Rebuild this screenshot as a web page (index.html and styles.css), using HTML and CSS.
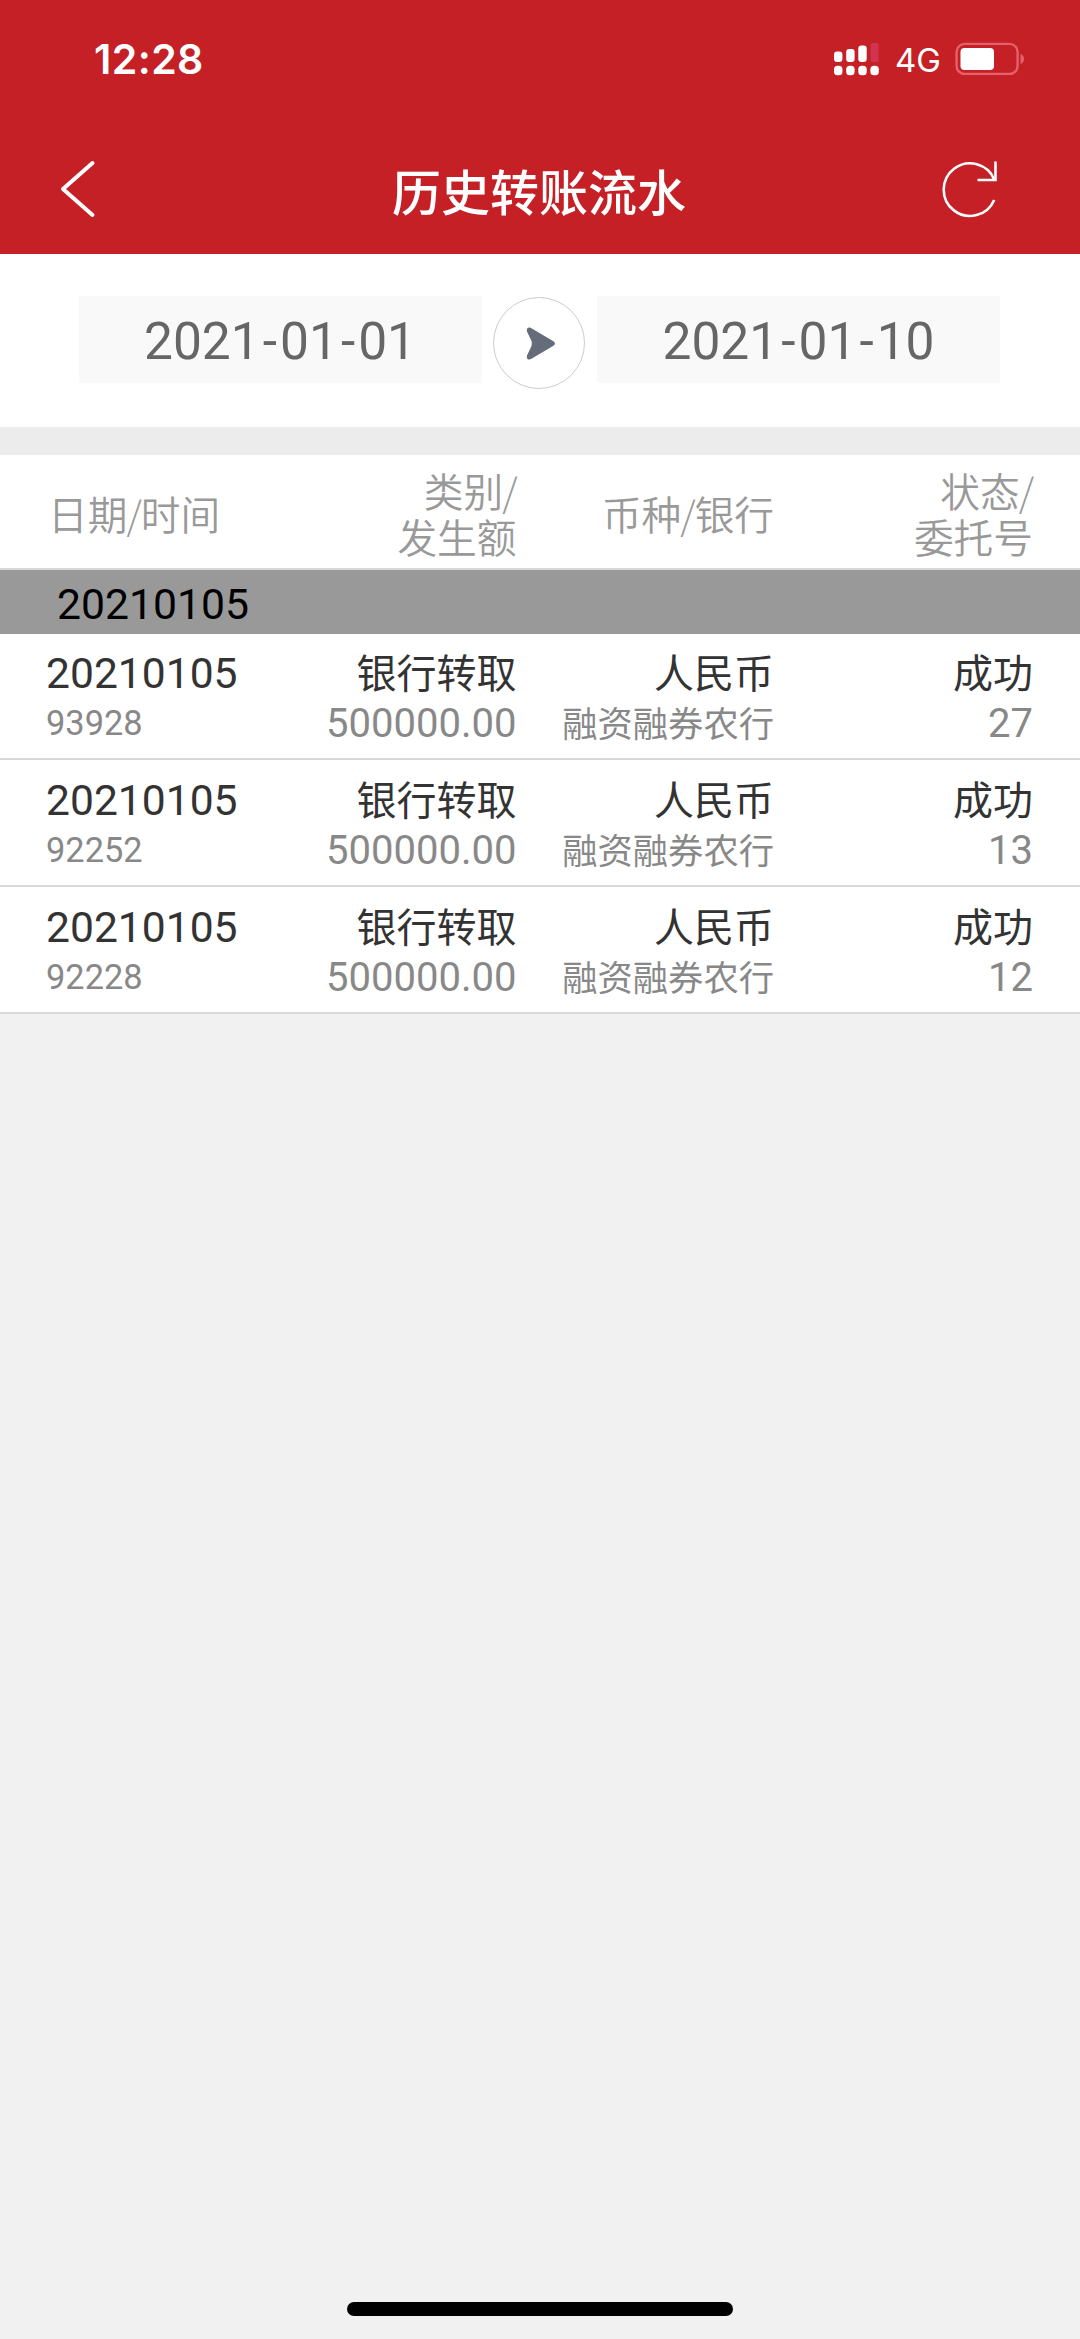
FILE: index.html
```html
<!DOCTYPE html>
<html lang="zh-CN">
<head>
<meta charset="utf-8">
<title>历史转账流水</title>
<link rel="stylesheet" href="styles.css">
</head>
<body>
<header class="top">
  <div class="status">
    <span class="clock">12:28</span>
    <div class="indicators">
      <svg class="signal" width="46" height="34" viewBox="0 0 46 34" fill="#fff">
        <rect x="0" y="9.5" width="8.4" height="10.5" rx="3"/>
        <rect x="12.2" y="7" width="8.4" height="13" rx="3"/>
        <rect x="24.3" y="3.5" width="8.4" height="16.5" rx="3"/>
        <rect x="36.6" y="1" width="8" height="19" rx="2" fill="#d23350"/>
        <rect x="0" y="23.7" width="8.4" height="9.6" rx="3.6"/>
        <rect x="12.2" y="23.7" width="8.4" height="9.6" rx="3.6"/>
        <rect x="24.3" y="23.7" width="8.4" height="9.6" rx="3.6"/>
        <rect x="36.4" y="23.7" width="8.4" height="9.6" rx="3.6"/>
      </svg>
      <span class="network">4G</span>
      <svg class="battery" width="70" height="34" viewBox="0 0 70 34">
        <rect x="1.6" y="1.9" width="61" height="30" rx="8" fill="none" stroke="#e4606a" stroke-width="2.4"/>
        <rect x="5.5" y="6" width="33.5" height="22" rx="4" fill="#fff"/>
        <path d="M65.5 12c4.8 1.6 4.8 8.4 0 10z" fill="#e4606a"/>
      </svg>
    </div>
  </div>
  <div class="nav">
    <svg class="back" width="40" height="60" viewBox="0 0 40 60" fill="none" stroke="#fff" stroke-width="4" stroke-linecap="round" stroke-linejoin="round"><path d="M35.500 4 6 30l29.500 26"/></svg>
    <h1 class="title">历史转账流水</h1>
    <svg class="refresh" width="60" height="60" viewBox="0 0 60 60" fill="none" stroke="#fff" stroke-width="2.600"><path d="M54.300 20.500A26.300 26.300 0 1 0 54.200 41"/><path d="M55.500 2.500V21H37.500"/></svg>
  </div>
</header>
<section class="range">
  <div class="date">2021<span class="dash">-</span>01<span class="dash">-</span>01</div>
  <div class="go"><svg width="30" height="33" viewBox="0 0 30 33"><path d="M5 1 27 14Q31 16.500 27 19L5 32C2 33.500 0 31.300 1.100 28.300L5.300 19.500Q6.400 16.500 5.300 13.500L1.100 4.700C0 1.700 2-.5 5 1Z" fill="#656d7b"/></svg></div>
  <div class="date">2021<span class="dash">-</span>01<span class="dash">-</span>10</div>
</section>
<main class="list">
  <div class="head">
    <div class="first">日期<i class="slash">/</i>时间</div>
    <div>类别<i class="slash">/</i><br>发生额</div>
    <div>币种<i class="slash">/</i>银行</div>
    <div>状态<i class="slash">/</i><br>委托号</div>
  </div>
  <div class="group">20210105</div>
  <div class="record">
    <span class="day">20210105</span><span>银行转取</span><span>人民币</span><span>成功</span>
    <span class="sub time">93928</span><span class="sub">500000.00</span><span class="sub bank">融资融券农行</span><span class="sub">27</span>
  </div>
  <div class="record">
    <span class="day">20210105</span><span>银行转取</span><span>人民币</span><span>成功</span>
    <span class="sub time">92252</span><span class="sub">500000.00</span><span class="sub bank">融资融券农行</span><span class="sub">13</span>
  </div>
  <div class="record">
    <span class="day">20210105</span><span>银行转取</span><span>人民币</span><span>成功</span>
    <span class="sub time">92228</span><span class="sub">500000.00</span><span class="sub bank">融资融券农行</span><span class="sub">12</span>
  </div>
</main>
<footer class="home"><div class="home-bar"></div></footer>
</body>
</html>
```
FILE: styles.css
```css
* { box-sizing: border-box; }
body {
  margin: 0;
  height: 2339px;
  display: flex;
  flex-direction: column;
  background: #f1f1f1;
  color: #333;
  font-family: Roboto, "Noto Sans CJK SC", sans-serif;
}
svg { display: block; }

.top { height: 253.5px; background: #c42026; color: #fff; }
.status {
  height: 118px;
  padding: 0 55px 0 94px;
  display: flex;
  justify-content: space-between;
  align-items: center;
}
.clock { font: 600 41px/50px Inter, sans-serif; letter-spacing: .4px; }
.indicators { display: flex; align-items: center; }
.network { margin: 2px 14px 0 15.500px; font: 400 33px/40px Inter, sans-serif; }
.nav {
  height: 135px;
  padding: 0 80px 0 57px;
  display: flex;
  justify-content: space-between;
  align-items: center;
}
.back, .refresh { margin-top: 7px; }
.title {
  margin: 9px 0 0 41px;
  font: 500 49px/70px "Noto Sans CJK SC", sans-serif;
}

.range {
  height: 173px;
  padding: 42.500px 80px 0 78.500px;
  display: flex;
  justify-content: space-between;
  background: #fff;
}
.date {
  width: 403px;
  height: 87px;
  background: #f9f9f9;
  color: #666;
  font-size: 51.500px;
  line-height: 92px;
  text-align: center;
}
.dash { padding: 0 3px; }
.go {
  width: 92px;
  height: 92px;
  margin-top: 1px;
  border: 1.500px solid #ccc;
  border-radius: 50%;
  display: flex;
  align-items: center;
  justify-content: center;
  padding-left: 4px;
}

.list { border-top: 28.500px solid #ececec; }
.head, .record {
  display: grid;
  grid-template-columns: 194px 276.500px 257.500px 259px;
  padding-left: 46px;
  background: #fff;
  text-align: right;
}
.head {
  height: 115.500px;
  padding-top: 10px;
  align-items: center;
  border-bottom: 2px solid #d8d8d8;
  color: #999;
  font-size: 39.700px;
  font-weight: 350;
  line-height: 46px;
}
.first { padding-left: 2px; text-align: left; }
.slash { margin: 0 -1px; font: 300 39px/40px "Noto Sans CJK SC", sans-serif; }
.group {
  height: 63.500px;
  padding-left: 57px;
  background: #999;
  color: #000;
  font-size: 42.700px;
  line-height: 69px;
}
.record {
  height: 126.800px;
  padding-top: 14.500px;
  grid-template-rows: 50px 46px;
  row-gap: 3px;
  align-items: baseline;
  border-bottom: 2px solid #d9d9d9;
  font-size: 40px;
  line-height: 50px;
}
.day { font-size: 42.600px; text-align: left; }
.sub { color: #888; font-size: 40px; line-height: 46px; }
.time { align-self: start; font-size: 34.400px; line-height: 44px; text-align: left; }
.bank { padding-top: 1px; font-size: 35.300px; }

.home { margin-top: auto; padding-bottom: 23px; display: flex; justify-content: center; }
.home-bar { width: 386px; height: 14.500px; border-radius: 8px; background: #000; }
```
